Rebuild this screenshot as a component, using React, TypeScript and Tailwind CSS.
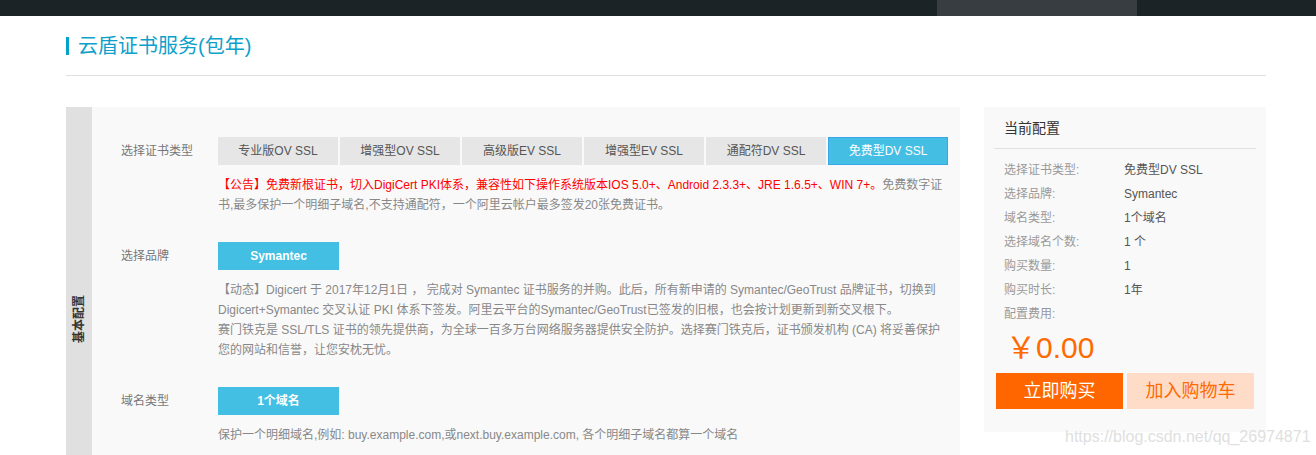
import React from 'react';

const certTypes = ['专业版OV SSL', '增强型OV SSL', '高级版EV SSL', '增强型EV SSL', '通配符DV SSL', '免费型DV SSL'];

const summary: [string, string][] = [
  ['选择证书类型:', '免费型DV SSL'],
  ['选择品牌:', 'Symantec'],
  ['域名类型:', '1个域名'],
  ['选择域名个数:', '1 个'],
  ['购买数量:', '1'],
  ['购买时长:', '1年'],
];

function Row({ label, children, className = '' }: { label: string; children: React.ReactNode; className?: string }) {
  return (
    <div className={`flex ${className}`}>
      <div className="w-[97px] h-[28px] flex items-center text-[12px] text-[#777] shrink-0">{label}</div>
      <div className="flex flex-col">{children}</div>
    </div>
  );
}

function BlueButton({ children }: { children: React.ReactNode }) {
  return (
    <div className="w-[121px] h-[28px] flex items-center justify-center bg-[#42bfe3] text-white text-[12px] font-bold">
      {children}
    </div>
  );
}

export default function App() {
  const selected = 5;

  return (
    <div className="relative min-h-screen bg-white font-['Liberation_Sans','Noto_Sans_CJK_SC',sans-serif]">
      {/* top nav strip */}
      <div className="h-4 bg-[#1c2327] flex">
        <div className="ml-[937px] w-[200px] h-full bg-[#373d41]" />
      </div>

      <div className="ml-[66px] w-[1200px]">
        <div className="h-[60px] flex items-center gap-[9px] border-b border-[#e1e1e1]">
          <div className="w-[3px] h-[18px] bg-[#00a1cb]" />
          <h1 className="text-[20px] leading-[24px] text-[#0e9fca]">云盾证书服务(包年)</h1>
        </div>

        <div className="mt-[31px] flex items-start gap-6">
          {/* main config panel */}
          <div className="w-[894px] h-[360px] bg-[#f9f9f9] flex">
            <div className="w-[26px] bg-[#e0e0e0] flex justify-center pt-[188px]">
              <span className="[writing-mode:vertical-rl] [text-orientation:sideways] rotate-180 text-[12px] leading-[12px] font-bold text-[#333] h-[48px]">
                基本配置
              </span>
            </div>

            <div className="pl-[29px] pt-[30px]">
              <Row label="选择证书类型">
                <div className="flex gap-[2px]">
                  {certTypes.map((t, i) =>
                    i === selected ? (
                      <div
                        key={t}
                        className="w-[120px] h-[28px] flex items-center justify-center text-[12px] text-white bg-[#44bee3] border border-[#3aa6ea]"
                      >
                        {t}
                      </div>
                    ) : (
                      <div
                        key={t}
                        className="w-[120px] h-[28px] flex items-center justify-center text-[12px] text-[#555] bg-[#e6e6e6]"
                      >
                        {t}
                      </div>
                    )
                  )}
                </div>
                <p className="mt-[10px] text-[12px] leading-[20px] text-[#888] whitespace-nowrap">
                  <span className="text-[#ff0000]">
                    【公告】免费新根证书，切入DigiCert PKI体系，兼容性如下操作系统版本IOS 5.0+、Android 2.3.3+、JRE 1.6.5+、WIN 7+。
                  </span>
                  免费数字证
                  <br />
                  书,最多保护一个明细子域名,不支持通配符，一个阿里云帐户最多签发20张免费证书。
                </p>
              </Row>

              <Row label="选择品牌" className="mt-[27px]">
                <BlueButton>Symantec</BlueButton>
                <p className="mt-[10px] text-[12px] leading-[20px] text-[#888] whitespace-nowrap">
                  【动态】Digicert 于 2017年12月1日 ， 完成对 Symantec 证书服务的并购。此后，所有新申请的 Symantec/GeoTrust 品牌证书，切换到
                  <br />
                  Digicert+Symantec 交叉认证 PKI 体系下签发。阿里云平台的Symantec/GeoTrust已签发的旧根，也会按计划更新到新交叉根下。
                  <br />
                  赛门铁克是 SSL/TLS 证书的领先提供商，为全球一百多万台网络服务器提供安全防护。选择赛门铁克后，证书颁发机构 (CA) 将妥善保护
                  <br />
                  您的网站和信誉，让您安枕无忧。
                </p>
              </Row>

              <Row label="域名类型" className="mt-[27px]">
                <BlueButton>1个域名</BlueButton>
                <p className="mt-[10px] text-[12px] leading-[20px] text-[#888] whitespace-nowrap">
                  保护一个明细域名,例如: buy.example.com,或next.buy.example.com, 各个明细子域名都算一个域名
                </p>
              </Row>
            </div>
          </div>

          {/* current config summary */}
          <div className="w-[282px] h-[325px] bg-[#f9f9f9]">
            <div className="mx-[10px] h-[42px] pt-[11px] border-b border-[#e1e1e1]">
              <div className="pl-[10px] text-[14px] leading-[20px] text-[#333]">当前配置</div>
            </div>
            <div className="mt-[9px] pl-[20px]">
              {summary.map(([k, v]) => (
                <div key={k} className="flex text-[12px] leading-[24px]">
                  <span className="w-[120px] text-[#999]">{k}</span>
                  <span className="text-[#555]">{v}</span>
                </div>
              ))}
              <div className="text-[12px] leading-[24px] text-[#999]">配置费用:</div>
            </div>
            <div className="mt-[4px] pl-[22px] text-[30px] leading-[36px] text-[#ff6a00]">￥0.00</div>
            <div className="mt-[7px] pl-[12px] flex gap-[4px]">
              <button className="w-[127px] h-[36px] bg-[#ff6600] text-white text-[18px]">立即购买</button>
              <button className="w-[127px] h-[36px] bg-[#ffdcc8] text-[#ff6a00] text-[18px]">加入购物车</button>
            </div>
          </div>
        </div>
      </div>

      <div className="absolute left-[1065px] top-[427px] text-[16px] leading-[20px] text-[#d8d8d8] opacity-80">
        https://blog.csdn.net/qq_26974871
      </div>
    </div>
  );
}
